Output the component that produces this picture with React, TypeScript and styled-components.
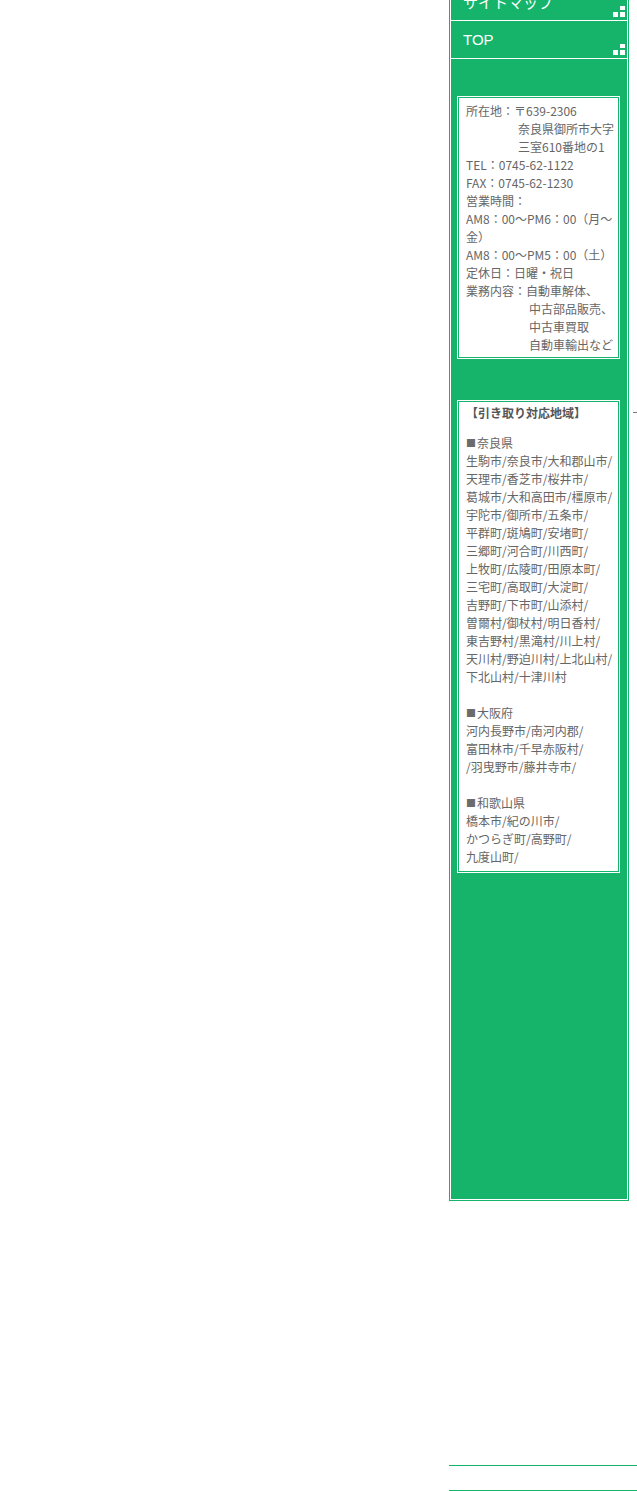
import React from "react";
import styled, { createGlobalStyle } from "styled-components";

const green = "#15b46a";
const textGray = "#666";

const GlobalStyle = createGlobalStyle`
  html, body {
    margin: 0;
    padding: 0;
    background: #fff;
  }
  body {
    font-family: "Noto Sans CJK JP", "Noto Sans", sans-serif;
    overflow: hidden;
  }
`;

const Page = styled.div`
  padding-left: 449px;
  height: 1491px;
  overflow: hidden;
`;

const Columns = styled.div`
  display: flex;
  align-items: flex-start;
`;

const Sidebar = styled.aside`
  width: 180px;
  box-sizing: border-box;
  margin-top: -19px;
  border: 1px solid ${green};
  background: ${green};
`;

const SidebarInner = styled.div`
  border: 1px solid #fff;
  padding-bottom: 326px;
`;

const Menu = styled.nav`
  display: flex;
  flex-direction: column;
`;

const MenuItem = styled.a`
  display: flex;
  align-items: center;
  height: 37px;
  padding-left: 12px;
  border-bottom: 1px solid #fff;
  color: #fff;
  font-family: "Liberation Sans", "Noto Sans CJK JP", sans-serif;
  font-size: 15px;
  text-decoration: none;
`;

const Corner = styled.svg`
  margin-left: auto;
  align-self: flex-end;
  margin-right: 2px;
  margin-bottom: 3px;
  flex-shrink: 0;
`;

const InfoBox = styled.div<{ $top: number; $padTop: number; $padBottom: number }>`
  width: 163px;
  box-sizing: border-box;
  margin: ${(p) => p.$top}px 0 0 6px;
  padding: ${(p) => p.$padTop}px 0 ${(p) => p.$padBottom}px 8px;
  border: 1px solid #fff;
  box-shadow: inset 0 0 0 1px ${green};
  background: #fff;
  color: ${textGray};
  font-size: 12px;
  line-height: 18px;
`;

const Line = styled.div<{ $indent?: number }>`
  white-space: nowrap;
  padding-left: ${(p) => p.$indent ?? 0}px;
  height: 18px;
`;

const AreaTitle = styled.div`
  font-weight: bold;
  color: #555;
  white-space: nowrap;
  height: 18px;
  margin-bottom: 12px;
`;

const Square = styled.span`
  display: inline-block;
  vertical-align: top;
  line-height: 18px;
  color: #6b6b6b;
  font-size: 10px;
  margin-right: 1px;
`;

const RightColumn = styled.div`
  flex: 1;
  padding: 412px 0 0 4px;
`;

const Dash = styled.div`
  width: 4px;
  height: 1px;
  background: #777;
`;

const FooterRule = styled.div<{ $gap: number }>`
  margin-top: ${(p) => p.$gap}px;
  border-top: 1px solid ${green};
`;

const CornerIcon = () => (
  <Corner width="12" height="11" viewBox="0 0 12 11">
    <rect x="7" y="0" width="5" height="4" fill="#fff" />
    <rect x="0" y="6" width="5" height="5" fill="#fff" />
    <rect x="7" y="6" width="5" height="5" fill="#fff" />
  </Corner>
);

const areas: { name: string; lines: string[] }[] = [
  {
    name: "奈良県",
    lines: [
      "生駒市/奈良市/大和郡山市/",
      "天理市/香芝市/桜井市/",
      "葛城市/大和高田市/橿原市/",
      "宇陀市/御所市/五条市/",
      "平群町/斑鳩町/安堵町/",
      "三郷町/河合町/川西町/",
      "上牧町/広陵町/田原本町/",
      "三宅町/高取町/大淀町/",
      "吉野町/下市町/山添村/",
      "曽爾村/御杖村/明日香村/",
      "東吉野村/黒滝村/川上村/",
      "天川村/野迫川村/上北山村/",
      "下北山村/十津川村",
    ],
  },
  {
    name: "大阪府",
    lines: ["河内長野市/南河内郡/", "富田林市/千早赤阪村/", "/羽曳野市/藤井寺市/"],
  },
  {
    name: "和歌山県",
    lines: ["橋本市/紀の川市/", "かつらぎ町/高野町/", "九度山町/"],
  },
];

export default function App() {
  return (
    <>
      <GlobalStyle />
      <Page>
        <Columns>
          <Sidebar>
            <SidebarInner>
              <Menu>
                <MenuItem href="#">
                  サイトマップ
                  <CornerIcon />
                </MenuItem>
                <MenuItem href="#">
                  TOP
                  <CornerIcon />
                </MenuItem>
              </Menu>

              <InfoBox $top={37} $padTop={5} $padBottom={4}>
                <Line>所在地：〒639-2306</Line>
                <Line $indent={52}>奈良県御所市大字</Line>
                <Line $indent={52}>三室610番地の1</Line>
                <Line>TEL：0745-62-1122</Line>
                <Line>FAX：0745-62-1230</Line>
                <Line>営業時間：</Line>
                <Line>AM8：00〜PM6：00（月〜</Line>
                <Line>金）</Line>
                <Line>AM8：00〜PM5：00（土）</Line>
                <Line>定休日：日曜・祝日</Line>
                <Line>業務内容：自動車解体、</Line>
                <Line $indent={63}>中古部品販売、</Line>
                <Line $indent={63}>中古車買取</Line>
                <Line $indent={63}>自動車輸出など</Line>
              </InfoBox>

              <InfoBox $top={41} $padTop={3} $padBottom={6}>
                <AreaTitle>【引き取り対応地域】</AreaTitle>
                {areas.map((area, i) => (
                  <React.Fragment key={area.name}>
                    {i > 0 && <Line />}
                    <Line>
                      <Square>■</Square>
                      {area.name}
                    </Line>
                    {area.lines.map((l) => (
                      <Line key={l}>{l}</Line>
                    ))}
                  </React.Fragment>
                ))}
              </InfoBox>
            </SidebarInner>
          </Sidebar>
          <RightColumn>
            <Dash />
          </RightColumn>
        </Columns>
        <FooterRule $gap={264} />
        <FooterRule $gap={24} />
      </Page>
    </>
  );
}
